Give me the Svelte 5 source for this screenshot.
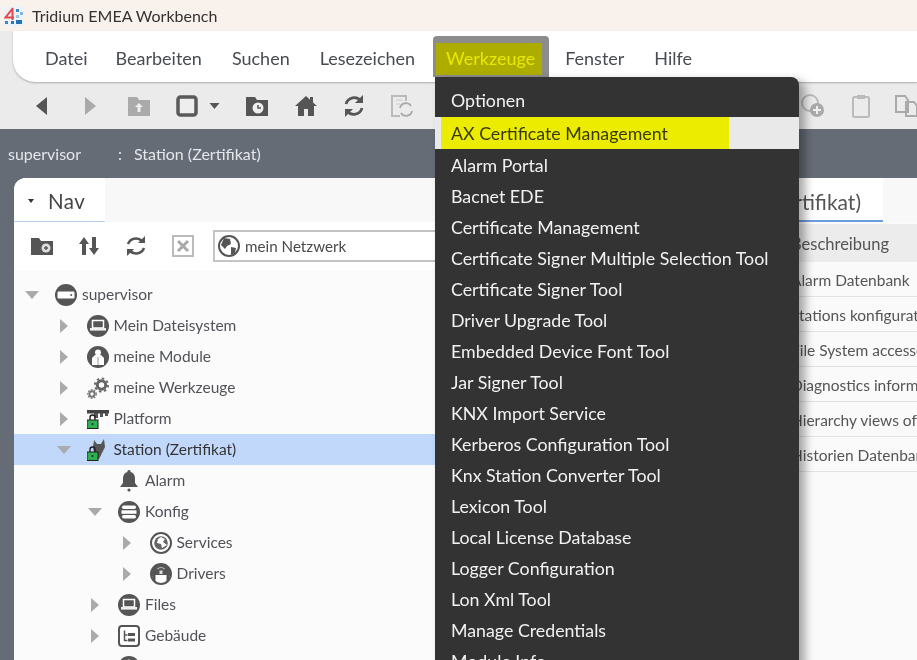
<script>
  const menus = ['Datei', 'Bearbeiten', 'Suchen', 'Lesezeichen', 'Werkzeuge', 'Fenster', 'Hilfe'];
  const tools = ['Alarm Portal', 'Bacnet EDE', 'Certificate Management', 'Certificate Signer Multiple Selection Tool', 'Certificate Signer Tool', 'Driver Upgrade Tool', 'Embedded Device Font Tool', 'Jar Signer Tool', 'KNX Import Service', 'Kerberos Configuration Tool', 'Knx Station Converter Tool', 'Lexicon Tool', 'Local License Database', 'Logger Configuration', 'Lon Xml Tool', 'Manage Credentials', 'Module Info'];
  const tree = [
    { label: 'supervisor', level: 0, arrow: 'open', icon: 'host' },
    { label: 'Mein Dateisystem', level: 1, arrow: 'closed', icon: 'drive' },
    { label: 'meine Module', level: 1, arrow: 'closed', icon: 'module' },
    { label: 'meine Werkzeuge', level: 1, arrow: 'closed', icon: 'gears' },
    { label: 'Platform', level: 1, arrow: 'closed', icon: 'platform' },
    { label: 'Station (Zertifikat)', level: 1, arrow: 'open', icon: 'station', selected: true },
    { label: 'Alarm', level: 2, arrow: 'none', icon: 'bell' },
    { label: 'Konfig', level: 2, arrow: 'open', icon: 'db' },
    { label: 'Services', level: 3, arrow: 'closed', icon: 'globe' },
    { label: 'Drivers', level: 3, arrow: 'closed', icon: 'driver' },
    { label: 'Files', level: 2, arrow: 'closed', icon: 'drive' },
    { label: 'Gebäude', level: 2, arrow: 'closed', icon: 'tree' },
    { label: '', level: 2, arrow: 'closed', icon: 'module' }
  ];
  const rows = ['Alarm Datenbank', 'Stations konfiguration', 'File System accessed', 'Diagnostics information', 'Hierarchy views of', 'Historien Datenbank'];
</script>

{#snippet icon(name)}
  <svg class="ticon" viewBox="0 0 22 22" aria-hidden="true">
    {#if name === 'host'}
      <circle cx="11" cy="11" r="11" fill="#555" /><rect x="2.500" y="7.500" width="17" height="7" rx="1.200" fill="#fff" /><circle cx="16.200" cy="11" r="1" fill="#555" />
    {:else if name === 'drive'}
      <circle cx="11" cy="11" r="11" fill="#555" /><rect x="5.500" y="5.500" width="11" height="7.500" fill="none" stroke="#fff" stroke-width="1.500" /><rect x="3" y="13" width="16" height="2.600" fill="#eee" />
    {:else if name === 'module'}
      <circle cx="11" cy="11" r="11" fill="#555" /><circle cx="11" cy="6.500" r="3" fill="#fff" /><path d="M8 9h6l3 3v7H5v-7z" fill="#fff" /><path d="M11 11v8" stroke="#999" />
    {:else if name === 'driver'}
      <circle cx="11" cy="11" r="10" fill="#fff" stroke="#555" stroke-width="2" /><path d="M1 11a10 10 0 0 1 20 0v1H1z" fill="#555" /><path d="M1.500 11h4v8l-2-2zM20.500 11h-4v8l2-2z" fill="#555" /><path d="M7.500 6a5 5 0 0 1 7 0" fill="none" stroke="#bbb" stroke-width="1.300" /><rect x="9.500" y="7.500" width="3" height="3.500" fill="#ddd" />
    {:else if name === 'gears'}
      <circle cx="14.500" cy="8" r="4.200" fill="none" stroke="#666" stroke-width="3" /><circle cx="14.500" cy="8" r="6.600" fill="none" stroke="#666" stroke-width="1.800" stroke-dasharray="2.500 2.700" /><circle cx="5" cy="17" r="2.700" fill="none" stroke="#777" stroke-width="2" /><circle cx="5" cy="17" r="4.300" fill="none" stroke="#777" stroke-width="1.200" stroke-dasharray="1.600 1.500" />
    {:else if name === 'platform'}
      <rect x="0" y="2" width="22" height="3.500" fill="#444" /><path d="M7 5h4v5H7zM13 5h3v4h-3zM18 5h3v3h-3z" fill="#555" /><rect x="0" y="12" width="11" height="8.500" fill="#2fb04f" stroke="#222" /><path d="M3 12V9.500a2.500 2.500 0 0 1 5 0V12" fill="none" stroke="#222" stroke-width="1.400" /><circle cx="5.500" cy="16" r="1" fill="#124" />
    {:else if name === 'station'}
      <path d="M7 1l3 4 4 0 3-5 1 8-3 6-3 6H8l-1-6-1-6z" fill="#555" /><rect x="0" y="13" width="11" height="8.500" fill="#2fb04f" stroke="#222" /><path d="M3 13v-2.500a2.500 2.500 0 0 1 5 0V13" fill="none" stroke="#222" stroke-width="1.400" /><circle cx="5.500" cy="17" r="1" fill="#124" />
    {:else if name === 'bell'}
      <path d="M11 0a1.500 1.500 0 0 1 1.500 2c3 .8 4.500 3 4.500 6v5l3 4H2l3-4V8c0-3 1.500-5.200 4.500-6A1.500 1.500 0 0 1 11 0z" fill="#555" /><circle cx="11" cy="20" r="1.600" fill="#555" />
    {:else if name === 'db'}
      <circle cx="11" cy="11" r="11" fill="#555" /><rect x="4" y="4.500" width="14" height="3.500" rx="1.700" fill="#fff" /><rect x="3.500" y="9.300" width="15" height="3.500" fill="#fff" /><rect x="4" y="14" width="14" height="3.500" rx="1.700" fill="#fff" />
    {:else if name === 'globe'}
      <circle cx="11" cy="11" r="10" fill="#fff" stroke="#555" stroke-width="2" /><circle cx="11" cy="11" r="6.800" fill="#666" /><path d="M11 5l4 2-2 3 4 3-5 3-1-4-4-1 1-4z" fill="#fff" />
    {:else if name === 'tree'}
      <rect x="1" y="1" width="20" height="20" rx="3" fill="#fff" stroke="#555" stroke-width="2" /><path d="M6.500 5.500v10h3M6.500 10h3" fill="none" stroke="#555" stroke-width="1.500" /><rect x="10" y="8" width="7" height="3" fill="#555" /><rect x="10" y="13.500" width="7" height="3" fill="#555" />
    {/if}
  </svg>
{/snippet}

<div class="screen">
  <header class="titlebar">
    <svg class="logo" viewBox="0 0 20 20" aria-hidden="true">
      <rect width="20" height="20" fill="#eef2f6" />
      <path d="M9 2 1.500 11.500H10M8.500 3v11" fill="none" stroke="#e2474b" stroke-width="2" />
      <rect x="12" y="3" width="3" height="3" fill="#3c88c9" /><rect x="16" y="6" width="3" height="3" fill="#7fb4dd" /><rect x="12" y="9" width="3" height="3" fill="#9cc4e4" />
      <rect x="1" y="15" width="3" height="3" fill="#3c88c9" /><rect x="7" y="15" width="3" height="3" fill="#2b78bb" /><rect x="12" y="14" width="6" height="4" fill="#1f74b9" />
    </svg>
    <span>Tridium EMEA Workbench</span>
  </header>

  <div class="chrome">
    <nav class="menubar">
      {#each menus as m}
        <span class="menu" class:active={m === 'Werkzeuge'}>{m}</span>
      {/each}
    </nav>
    <div class="toolbar">
      <svg class="tb" viewBox="0 0 24 24" aria-hidden="true"><path d="M17 3 6 12l11 9z" fill="#555" /></svg>
      <svg class="tb" viewBox="0 0 24 24" aria-hidden="true"><path d="M7 3l11 9-11 9z" fill="#aaa" /></svg>
      <svg class="tb" viewBox="0 0 24 24" aria-hidden="true"><path d="M1 3h9l2 3h11v16H1z" fill="#aaa" /><path d="M12 9l4 4h-2.500v5h-3v-5H8z" fill="#eee" /></svg>
      <svg class="tb" viewBox="0 0 24 24" aria-hidden="true"><rect x="3" y="3" width="18" height="18" rx="2.500" fill="#eee" stroke="#5a5a5a" stroke-width="3.500" /></svg>
      <svg class="caret" viewBox="0 0 10 6" aria-hidden="true"><path d="M0 0h10L5 6z" fill="#555" /></svg>
      <svg class="tb" viewBox="0 0 24 24" aria-hidden="true"><path d="M1 3h9l2 3h11v16H1z" fill="#555" /><circle cx="13" cy="14" r="5.500" fill="#eee" /><path d="M13 11v3h3" fill="none" stroke="#555" stroke-width="1.500" /></svg>
      <svg class="tb" viewBox="0 0 24 24" aria-hidden="true"><path d="M12 2 1 12h3v10h6v-7h4v7h6V12h3l-4-3.600V3h-3v2.700z" fill="#555" /></svg>
      <svg class="tb" viewBox="0 0 24 24" aria-hidden="true"><path d="M4 10a8.500 8.500 0 0 1 15-3M20 14a8.500 8.500 0 0 1-15 3" fill="none" stroke="#555" stroke-width="2.800" /><path d="M21 1v8h-8zM3 23v-8h8z" fill="#555" /></svg>
      <svg class="tb" viewBox="0 0 24 24" aria-hidden="true"><path d="M10 22H2V2h14v5" fill="none" stroke="#bbb" stroke-width="2" /><path d="M6 6h7M6 10h4" stroke="#ccc" /><path d="M10 14a6 6 0 0 1 11-2M22 17a6 6 0 0 1-11 2" fill="none" stroke="#aaa" stroke-width="1.800" /></svg>
      <svg class="tb right-first" viewBox="0 0 24 24" aria-hidden="true"><circle cx="9" cy="9" r="8" fill="none" stroke="#bbb" stroke-width="2" /><circle cx="16" cy="16" r="7" fill="#aaa" /><path d="M16 12v8M12 16h8" stroke="#eee" stroke-width="2" /></svg>
      <svg class="tb" viewBox="0 0 24 24" aria-hidden="true"><rect x="4" y="3" width="16" height="20" rx="1.500" fill="none" stroke="#bbb" stroke-width="2" /><rect x="8" y="1" width="8" height="4" fill="#bbb" /></svg>
      <svg class="tb last" viewBox="0 0 24 24" aria-hidden="true"><path d="M2 2h9l3 4v12H2zM12 8h8l3 4v10H12z" fill="none" stroke="#aaa" stroke-width="2" /></svg>
    </div>
  </div>

  <div class="crumbs">
    <span>supervisor</span>
    <span class="sep">:</span>
    <span>Station (Zertifikat)</span>
  </div>

  <main class="workspace">
    <section class="nav">
      <div class="tabstrip">
        <div class="navtab"><i class="mini"></i>Nav</div>
      </div>
      <div class="navtools">
        <svg class="nt" viewBox="0 0 22 20" aria-hidden="true"><path d="M0 2h8l2 3h12v14H0z" fill="#555" /><circle cx="15" cy="12" r="4.500" fill="#ddd" /><path d="M15 10v4M13 12h4" stroke="#555" stroke-width="1.400" /></svg>
        <svg class="nt" viewBox="0 0 22 20" aria-hidden="true"><path d="M6 1l5 7H8v11H4V8H1zM16 19l5-7h-3V1h-4v11h-3z" fill="#555" /></svg>
        <svg class="nt" viewBox="0 0 22 22" aria-hidden="true"><path d="M3 9a8.500 8.500 0 0 1 14-3M19 13a8.500 8.500 0 0 1-14 3" fill="none" stroke="#555" stroke-width="2.600" /><path d="M20 1v7h-7zM2 21v-7h7z" fill="#555" /></svg>
        <svg class="nt" viewBox="0 0 22 22" aria-hidden="true"><rect x="1" y="1" width="20" height="20" fill="none" stroke="#bbb" stroke-width="2" /><path d="M6 6l10 10M16 6 6 16" stroke="#aaa" stroke-width="3" /></svg>
        <div class="address">
          <svg class="ticon" viewBox="0 0 22 22" aria-hidden="true"><circle cx="11" cy="11" r="10" fill="#fff" stroke="#555" stroke-width="2" /><path d="M6 3l6 1 1 5-4 2-2 3-4-4zM13 12l5 1-1 5-4 2z" fill="#555" /></svg>
          <span>mein Netzwerk</span>
        </div>
      </div>
      <ul class="tree">
        {#each tree as n}
          <li class="node" class:selected={n.selected} style="padding-left: {n.level * 31.500 + 11}px">
            {#if n.arrow === 'open'}
              <svg class="arrow" viewBox="0 0 14 14" aria-hidden="true"><path d="M0 3h14L7 11z" fill="#aaa" /></svg>
            {:else if n.arrow === 'closed'}
              <svg class="arrow" viewBox="0 0 14 14" aria-hidden="true"><path d="M3 0l8 7-8 7z" fill="#aaa" /></svg>
            {:else}
              <span class="arrow"></span>
            {/if}
            {@render icon(n.icon)}
            <span class="label">{n.label}</span>
          </li>
        {/each}
      </ul>
    </section>

    <section class="detail">
      <div class="detailstrip"><div class="dtab">Station (Zertifikat)</div></div>
      <div class="thead">Beschreibung</div>
      {#each rows as r}
        <div class="trow">{r}</div>
      {/each}
    </section>
  </main>

  <div class="dropdown">
    <div class="item first">Optionen</div>
    <div class="item hover"><span class="mark">AX Certificate Management</span></div>
    {#each tools as t}
      <div class="item">{t}</div>
    {/each}
  </div>
</div>

<style>
  :global(body) { margin: 0; }
  .screen {
    position: relative;
    display: flex;
    flex-direction: column;
    width: 917px;
    height: 660px;
    overflow: hidden;
    background: #666c76;
    color: #4a4a4a;
    font-family: Lato, "Noto Sans", sans-serif;
    filter: blur(0.35px);
  }
  .titlebar {
    display: flex;
    align-items: center;
    gap: 8px;
    flex: none;
    height: 31px;
    padding-left: 4px;
    background: #f9f1ec;
    color: #333;
    font-size: 16px;
  }
  .logo { width: 20px; height: 20px; }
  .chrome { flex: none; background: #ebebeb; }
  .menubar {
    display: flex;
    align-items: center;
    gap: 30px;
    height: 51px;
    margin-left: 13px;
    padding: 3px 0 0 32px;
    box-sizing: border-box;
    background: #fff;
    border-bottom-left-radius: 22px;
    box-shadow: 0 1px 2px #aaa;
    font-size: 18px;
  }
  .menu { position: relative; color: #474b52; }
  .menu:first-child { margin-right: -2px; }
  .menu.active {
    color: #e8e800;
    z-index: 0;
    margin-left: 1px;
  }
  .menu.active::before {
    content: "";
    position: absolute;
    z-index: -1;
    left: -13px;
    right: -14px;
    top: -11px;
    bottom: -8px;
    background: #8c8c8c;
    border-radius: 4px 4px 0 0;
  }
  .menu.active::after {
    content: "";
    position: absolute;
    z-index: -1;
    left: -10px;
    right: -7px;
    top: -4px;
    bottom: -6px;
    background: #adad00;
  }
  .toolbar {
    position: relative;
    height: 47px;
    display: flex;
    align-items: center;
    padding-left: 30px;
    gap: 24.300px;
    overflow: hidden;
  }
  .tb { width: 24px; height: 24px; flex: none; }
  .caret { width: 11px; height: 6px; margin-left: -14px; margin-right: 1px; flex: none; }
  .right-first { margin-left: 362px; }
  .last { margin-left: -3px; }
  .crumbs {
    display: flex;
    flex: none;
    align-items: center;
    height: 49px;
    padding: 0 0 1px 8px;
    box-sizing: border-box;
    color: #e4e6ea;
    font-size: 16px;
  }
  .sep { margin: 0 12px 0 37px; }
  .workspace {
    display: flex;
    flex: 1;
    min-height: 0;
    margin-left: 14px;
    gap: 2px;
  }
  .nav {
    flex: none;
    width: 440px;
    background: #fbfbfb;
    border-top-left-radius: 12px;
    overflow: hidden;
  }
  .tabstrip { height: 44px; background: #f8f8f8; }
  .navtab {
    display: flex;
    align-items: center;
    width: 91px;
    height: 44px;
    box-sizing: border-box;
    padding: 3px 0 0 14px;
    background: #fff;
    border-bottom: 1px solid #b9cff0;
    color: #444;
    font-size: 20.500px;
    letter-spacing: 0.5px;
  }
  .mini {
    width: 0;
    height: 0;
    margin-right: 14px;
    border: 3px solid transparent;
    border-top: 4px solid #333;
    border-bottom: 0;
  }
  .navtools {
    display: flex;
    align-items: center;
    gap: 25px;
    height: 48px;
    padding-left: 17px;
    background: #fff;
  }
  .nt { width: 22px; height: 22px; flex: none; }
  .address {
    display: flex;
    align-items: center;
    flex: 1;
    gap: 5px;
    height: 32px;
    margin-left: -6px;
    padding-left: 3px;
    background: #fff;
    border: 1px solid #c4c4c4;
    border-width: 2px 0 2px 2px;
    box-sizing: border-box;
    font-size: 15.200px;
  }
  .tree { list-style: none; margin: 0; padding: 9px 0 0; }
  .node {
    display: flex;
    align-items: center;
    gap: 5px;
    height: 31px;
    font-size: 15.500px;
    color: #505258;
  }
  .label { margin-top: -1px; }
  .node.selected { background: #c2d8fb; color: #333; }
  .arrow { width: 14px; height: 14px; flex: none; margin-right: 11px; }
  .ticon { width: 22px; height: 22px; flex: none; }
  .detail { flex: 1; background: #fafafa; font-size: 15.500px; color: #555; min-width: 0; }
  .detailstrip { height: 44px; background: #f8f8f8; display: flex; }
  .dtab {
    flex: none;
    width: 427px;
    text-align: right;
    padding: 2px 22px 0 0;
    box-sizing: border-box;
    height: 44px;
    line-height: 44px;
    background: #fff;
    border-bottom: 2px solid #6c9ce0;
    font-size: 21px;
    white-space: nowrap;
    overflow: hidden;
  }
  .thead {
    height: 38px;
    line-height: 40px;
    margin-top: 2px;
    padding-left: 335px;
    background: #ececec;
    white-space: nowrap;
    font-size: 16.500px;
  }
  .trow {
    height: 35px;
    line-height: 36px;
    box-sizing: border-box;
    padding-left: 335px;
    border-bottom: 1px solid #e2e2e2;
    white-space: nowrap;
  }
  .dropdown {
    position: absolute;
    left: 435px;
    top: 77px;
    width: 364px;
    background: #333;
    border-top-right-radius: 8px;
    box-shadow: 6px 4px 10px rgba(0, 0, 0, 0.35);
    color: #f2f2f2;
    font-size: 17.800px;
  }
  .item {
    display: flex;
    align-items: center;
    height: 31px;
    padding-left: 16px;
  }
  .item.first { height: 40px; padding-top: 6px; box-sizing: border-box; }
  .item.hover {
    height: 32px;
    padding-left: 6px;
    background: #e9e9e9;
    color: #3a3a00;
  }
  .mark {
    display: flex;
    align-items: center;
    width: 288px;
    height: 100%;
    padding-left: 10px;
    box-sizing: border-box;
    background: #ecec00;
  }
</style>
